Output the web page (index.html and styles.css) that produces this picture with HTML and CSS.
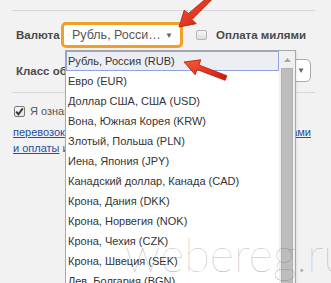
FILE: index.html
```html
<!DOCTYPE html>
<html lang="ru">
<head>
<meta charset="utf-8">
<title>Валюта</title>
<link rel="stylesheet" href="styles.css">
</head>
<body>
<div class="page">
  <div class="rule"></div>
  <div class="row row-currency">
    <span class="label label-currency">Валюта</span>
    <div class="select-main">
      <span class="select-text">Рубль, Росси…</span>
      <span class="select-arrow">▼</span>
    </div>
    <span class="cb"></span>
    <span class="label label-miles">Оплата милями</span>
  </div>
  <div class="row row-class">
    <span class="label">Класс обслуживания</span>
    <div class="select-second">
      <span class="select-text">Эконом</span>
      <span class="select-arrow">▼</span>
    </div>
  </div>
  <div class="rule rule-2"></div>
  <div class="agree">
    <div class="agree-first">
      <span class="cb cb-checked"><svg width="9" height="9" viewBox="0 0 9 9"><path d="M1.2 4.6 L3.4 7.2 L7.8 1.4" fill="none" stroke="#333" stroke-width="1.8"/></svg></span>
      <span>Я ознакомлен(а) с правилами</span>
    </div>
    <div class="agree-line justify"><a href="#">перевозок</a> <a href="#">и условиями применения тарифа, правилами бронирования</a></div>
    <div class="agree-line"><a href="#">и оплаты</a> и согласен(на) с ними</div>
  </div>

  <div class="dropdown">
    <div class="dd-items">
      <div class="dd-item selected">Рубль, Россия (RUB)</div>
      <div class="dd-item">Евро (EUR)</div>
      <div class="dd-item">Доллар США, США (USD)</div>
      <div class="dd-item">Вона, Южная Корея (KRW)</div>
      <div class="dd-item">Злотый, Польша (PLN)</div>
      <div class="dd-item">Иена, Япония (JPY)</div>
      <div class="dd-item">Канадский доллар, Канада (CAD)</div>
      <div class="dd-item">Крона, Дания (DKK)</div>
      <div class="dd-item">Крона, Норвегия (NOK)</div>
      <div class="dd-item">Крона, Чехия (CZK)</div>
      <div class="dd-item">Крона, Швеция (SEK)</div>
      <div class="dd-item">Лев, Болгария (BGN)</div>
    </div>
    <div class="dd-scroll">
      <div class="dd-up"><svg width="7" height="4" viewBox="0 0 7 4"><path d="M0 4 L3.5 0 L7 4 Z" fill="#a6a6a6"/></svg></div>
      <div class="dd-thumb"></div>
    </div>
  </div>

  <div class="watermark">webereg.ru</div>

  <svg class="arrows" width="331" height="283" viewBox="0 0 331 283">
    <defs>
      <linearGradient id="rg" x1="0" y1="0" x2="1" y2="1">
        <stop offset="0" stop-color="#ff5a3c"/>
        <stop offset="1" stop-color="#c81808"/>
      </linearGradient>
    </defs>
    <polygon points="179,27 184.2,10.3 188.5,13.5 208.5,-3.5 211.5,0 192,19.5 196.2,23.7" fill="url(#rg)" stroke="#b01505" stroke-width="0.8"/>
    <polygon points="184,62 200.8,59.8 198.9,65 226.9,75.7 225.1,80.3 197.1,69.6 195.2,74.8" fill="url(#rg)" stroke="#b01505" stroke-width="0.8"/>
  </svg>
</div>
</body>
</html>
```
FILE: styles.css
```css
html, body {
  margin: 0;
  padding: 0;
}
body {
  background: #f2f2f2;
  font-family: "Liberation Sans", Arial, sans-serif;
  color: #444;
}
.page {
  position: relative;
  width: 331px;
  height: 283px;
  overflow: hidden;
  box-sizing: border-box;
  padding: 10px 16px 0 12px;
}
.rule {
  border-top: 1px solid #d6d6d6;
}
.row {
  display: flex;
  align-items: center;
}
.row-currency {
  margin-top: 11px;
  height: 26px;
}
.label {
  font-weight: bold;
  font-size: 11.5px;
  color: #4a4a4a;
  padding-left: 4px;
  white-space: nowrap;
}
.label-currency {
  width: 49px;
  flex: none;
  box-sizing: border-box;
}
.select-main {
  flex: none;
  width: 122px;
  height: 26px;
  box-sizing: border-box;
  border: 3px solid #f0a024;
  border-radius: 5px;
  background: #fff;
  display: flex;
  align-items: center;
  justify-content: space-between;
  padding: 0 7px 0 8px;
}
.select-text {
  font-size: 12.5px;
  color: #555;
  white-space: nowrap;
}
.select-arrow {
  font-size: 8px;
  color: #666;
}
.cb {
  flex: none;
  width: 11px;
  height: 10px;
  box-sizing: border-box;
  border: 1px solid #b4b4b4;
  border-radius: 2px;
  background: linear-gradient(#f6f6f6, #dedede);
  margin-left: 13px;
}
.label-miles {
  margin-left: 5px;
}
.row-class {
  margin-top: 11px;
  height: 23px;
  padding-right: 4px;
}
.select-second {
  margin-left: auto;
  width: 110px;
  height: 23px;
  box-sizing: border-box;
  border: 1px solid #a9a9a9;
  border-radius: 5px;
  background: #fff;
  display: flex;
  align-items: center;
  justify-content: space-between;
  padding: 0 5px 0 8px;
}
.rule-2 {
  margin-top: 10px;
}
.agree {
  margin-top: 10px;
  font-size: 11px;
  color: #555;
  padding-left: 1px;
}
.agree-first {
  display: flex;
  align-items: center;
  height: 16px;
  margin-bottom: 5px;
  gap: 5px;
}
.cb-checked {
  margin-left: 1px;
  width: 11px;
  height: 11px;
  border: 1px solid #777;
  background: linear-gradient(#fafafa, #e2e2e2);
  display: flex;
  align-items: center;
  justify-content: center;
}
.agree-line {
  line-height: 16px;
  white-space: nowrap;
}
.agree-line.justify {
  width: 298px;
  white-space: normal;
  text-align: justify;
  text-align-last: justify;
  height: 16px;
  overflow: hidden;
}
.agree a {
  color: #1f4fa6;
  text-decoration: underline;
}
.dropdown {
  position: absolute;
  left: 65px;
  top: 50px;
  width: 231px;
  height: 260px;
  box-sizing: border-box;
  border: 1px solid #a3a8b4;
  background: #fff;
  display: flex;
  box-shadow: 1px 1px 2px rgba(0,0,0,0.08);
}
.dd-items {
  flex: 1;
}
.dd-item {
  height: 20px;
  line-height: 20px;
  font-size: 11px;
  color: #333;
  padding-left: 2px;
  white-space: nowrap;
}
.dd-item.selected {
  background: #eceef3;
  outline: 1px solid #8fa4dc;
  outline-offset: -1px;
}
.dd-scroll {
  width: 16px;
  flex: none;
  background: #f0f0f0;
  display: flex;
  flex-direction: column;
  align-items: center;
}
.dd-up {
  height: 17px;
  display: flex;
  align-items: center;
  justify-content: center;
}
.dd-thumb {
  width: 12px;
  flex: 1;
  background: #bdbdbd;
  border: 1px solid #b0b0b0;
  box-sizing: border-box;
}
.watermark {
  position: absolute;
  left: 125px;
  top: 226px;
  font-family: "Lato", "Roboto", sans-serif;
  font-weight: 100;
  font-size: 47px;
  color: rgba(120, 120, 120, 0.55);
  white-space: nowrap;
  pointer-events: none;
}
.arrows {
  position: absolute;
  left: 0;
  top: 0;
  pointer-events: none;
}
```
